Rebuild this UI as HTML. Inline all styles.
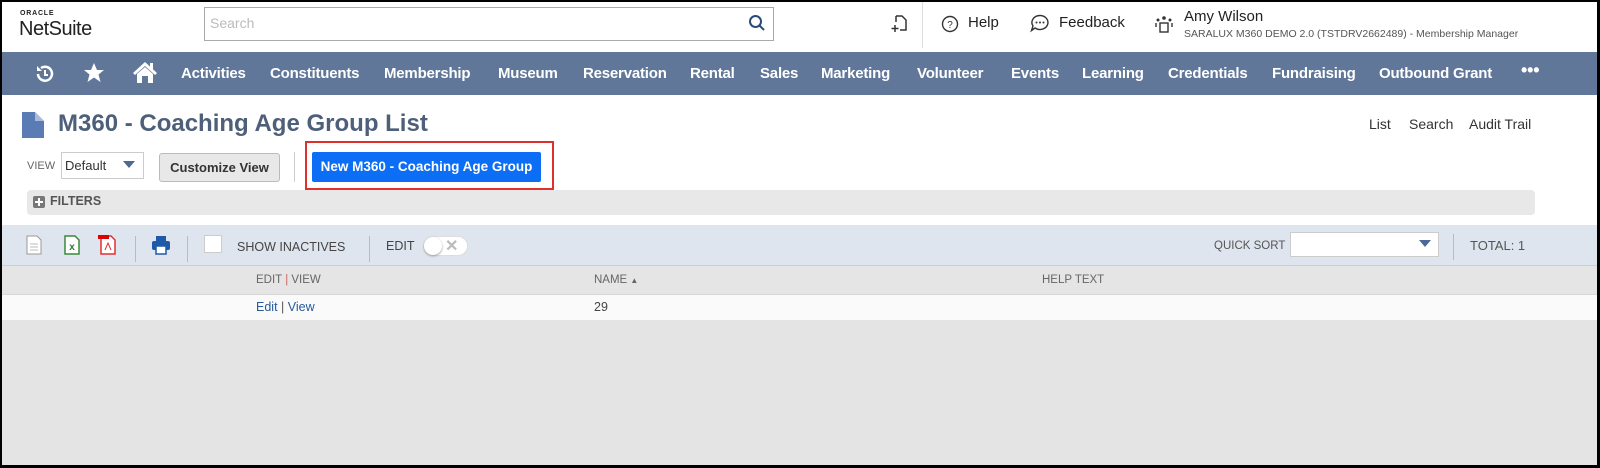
<!DOCTYPE html>
<html><head><meta charset="utf-8"><style>
*{margin:0;padding:0;box-sizing:border-box}
body{width:1600px;height:468px;overflow:hidden;background:#000;font-family:"Liberation Sans",sans-serif;position:relative}
#pg{position:absolute;left:2px;top:2px;width:1595px;height:463px;background:#e4e4e4;overflow:hidden}
.a{position:absolute;white-space:nowrap}
.nav span{position:absolute;top:13px;color:#fff;font-weight:bold;font-size:15px;letter-spacing:-0.2px}
</style></head><body><div id="pg">
<div class="a" style="left:0;top:0;width:1595px;height:50px;background:#fff"></div>
<div class="a" style="left:18px;top:8px;font-size:7px;letter-spacing:0.8px;color:#222;font-weight:bold">ORACLE</div>
<div class="a" style="left:17px;top:16px;font-size:20px;color:#222;letter-spacing:-0.5px">NetSuite</div>
<div class="a" style="left:202px;top:5px;width:570px;height:34px;border:1px solid #aaa;background:#fff"></div>
<div class="a" style="left:208px;top:13px;font-size:14px;color:#bbb">Search</div>
<svg class="a" style="left:746px;top:12px" width="18" height="18" viewBox="0 0 18 18"><circle cx="7.5" cy="7.5" r="5.5" fill="none" stroke="#2a4a7a" stroke-width="2"/><line x1="11.5" y1="11.5" x2="16" y2="16" stroke="#2a4a7a" stroke-width="2"/></svg>
<svg class="a" style="left:888px;top:12px" width="18" height="20" viewBox="0 0 18 20"><path d="M6 2h6l4 4v10H10M6 2v6" fill="none" stroke="#333" stroke-width="1.5"/><path d="M5 11v7M1.5 14.5h7" stroke="#333" stroke-width="1.5"/></svg>
<div class="a" style="left:920px;top:0;width:1px;height:46px;background:#ddd"></div>
<svg class="a" style="left:939px;top:13px" width="18" height="18"><circle cx="9" cy="9" r="7.5" fill="none" stroke="#333" stroke-width="1.4"/><text x="9" y="13" font-size="10" text-anchor="middle" font-family="Liberation Sans" fill="#333">?</text></svg>
<div class="a" style="left:966px;top:12px;font-size:15px;color:#222">Help</div>
<svg class="a" style="left:1028px;top:12px" width="20" height="19"><path d="M10 1.5a8 7 0 1 1 -5 12.5l-3.5 2.5 1.5-4.5a8 7 0 0 1 7-10.5z" fill="none" stroke="#333" stroke-width="1.4"/><circle cx="6.5" cy="8.5" r="1" fill="#333"/><circle cx="10" cy="8.5" r="1" fill="#333"/><circle cx="13.5" cy="8.5" r="1" fill="#333"/></svg>
<div class="a" style="left:1057px;top:12px;font-size:15px;color:#222">Feedback</div>
<svg class="a" style="left:1152px;top:12px" width="20" height="20"><circle cx="10" cy="4" r="1.8" fill="#333"/><circle cx="4" cy="6" r="1.5" fill="#333"/><circle cx="16" cy="6" r="1.5" fill="#333"/><rect x="6" y="9" width="8" height="9" fill="none" stroke="#333" stroke-width="1.4"/><path d="M2 9v4M18 9v4" stroke="#333" stroke-width="1.4"/></svg>
<div class="a" style="left:1182px;top:6px;font-size:15px;color:#222">Amy Wilson</div>
<div class="a" style="left:1182px;top:26px;font-size:10.5px;color:#555">SARALUX M360 DEMO 2.0 (TSTDRV2662489) - Membership Manager</div>
<div class="a nav" style="left:0;top:50px;width:1595px;height:43px;background:#607799">
<svg class="a" style="left:32px;top:11px" width="22" height="22"><path d="M4 11a7 7 0 1 0 3-6" fill="none" stroke="#fff" stroke-width="2.5"/><path d="M3 3v5h5" fill="#fff"/><path d="M11 7v5h3" fill="none" stroke="#fff" stroke-width="2"/></svg>
<svg class="a" style="left:81px;top:10px" width="22" height="22"><path d="M11 1l3 7h7l-5.5 4.5 2 7.5-6.5-4.5-6.5 4.5 2-7.5L1 8h7z" fill="#fff"/></svg>
<svg class="a" style="left:130px;top:8px" width="26" height="24"><path d="M13 2L1 13l2 2 10-9 10 9 2-2z" fill="#fff"/><path d="M5 14v9h16v-9l-8-7z" fill="#fff"/><rect x="10" y="16" width="6" height="7" fill="#607799"/><rect x="18" y="3" width="3" height="6" fill="#fff"/></svg>
<span style="left:179px">Activities</span><span style="left:268px">Constituents</span><span style="left:382px">Membership</span><span style="left:496px">Museum</span><span style="left:581px">Reservation</span><span style="left:688px">Rental</span><span style="left:758px">Sales</span><span style="left:819px">Marketing</span><span style="left:915px">Volunteer</span><span style="left:1009px">Events</span><span style="left:1080px">Learning</span><span style="left:1166px">Credentials</span><span style="left:1270px">Fundraising</span><span style="left:1377px">Outbound Grant</span><span style="left:1519px;top:8px;font-size:18px">•••</span>
</div>
<div class="a" style="left:0;top:93px;width:1595px;height:130px;background:#fff"></div>
<svg class="a" style="left:20px;top:110px" width="22" height="26"><path d="M0 0h13l9 9v17H0z" fill="#5b7bb4"/><path d="M13 0l9 9h-9z" fill="#a9bbd8"/></svg>
<div class="a" style="left:56px;top:108px;font-size:24px;font-weight:bold;color:#4d5f79">M360 - Coaching Age Group List</div>
<div class="a" style="left:1367px;top:114px;font-size:14px;color:#333">List</div>
<div class="a" style="left:1407px;top:114px;font-size:14px;color:#333">Search</div>
<div class="a" style="left:1467px;top:114px;font-size:14px;color:#333">Audit Trail</div>
<div class="a" style="left:25px;top:158px;font-size:11px;color:#666">VIEW</div>
<div class="a" style="left:59px;top:150px;width:83px;height:27px;border:1px solid #ccc;background:#fff"></div>
<div class="a" style="left:63px;top:156px;font-size:13px;color:#333">Default</div>
<svg class="a" style="left:121px;top:159px" width="12" height="8"><path d="M0 0h12l-6 7z" fill="#4d6a96"/></svg>
<div class="a" style="left:157px;top:151px;width:121px;height:29px;border:1px solid #bbb;border-radius:3px;background:#e8e8e8;font-size:13px;font-weight:bold;color:#333;text-align:center;line-height:27px">Customize View</div>
<div class="a" style="left:292px;top:150px;width:1px;height:30px;background:#ccc"></div>
<div class="a" style="left:303px;top:139px;width:249px;height:49px;border:2px solid #e0302b"></div>
<div class="a" style="left:310px;top:150px;width:229px;height:30px;background:#0c6ef5;border-radius:2px;color:#fff;font-size:13.5px;font-weight:bold;text-align:center;line-height:30px">New M360 - Coaching Age Group</div>
<div class="a" style="left:25px;top:188px;width:1508px;height:25px;background:#e8e8e8;border-radius:4px"></div>
<div class="a" style="left:31px;top:194px;width:12px;height:12px;background:#777;border-radius:2px"></div>
<div class="a" style="left:33px;top:199px;width:8px;height:2px;background:#fff"></div>
<div class="a" style="left:36px;top:196px;width:2px;height:8px;background:#fff"></div>
<div class="a" style="left:48px;top:192px;font-size:12.5px;font-weight:bold;color:#555">FILTERS</div>
<div class="a" style="left:0;top:223px;width:1595px;height:41px;background:#dfe5ee;border-bottom:1px solid #ccd"></div>
<svg class="a" style="left:24px;top:233px" width="16" height="20"><path d="M1 1h10l4 4v14H1z" fill="#fff" stroke="#999"/><path d="M4 9h8M4 12h8M4 15h8" stroke="#bbb"/></svg>
<svg class="a" style="left:62px;top:233px" width="16" height="20"><path d="M1 1h10l4 4v14H1z" fill="#fff" stroke="#3a8a3a" stroke-width="1.5"/><text x="8" y="15" font-size="10" font-weight="bold" text-anchor="middle" fill="#2a7a2a" font-family="Liberation Sans">x</text></svg>
<svg class="a" style="left:96px;top:231px" width="18" height="22"><path d="M3 3h10l4 4v14H3z" fill="#fff" stroke="#e03030" stroke-width="1.5"/><rect x="0" y="2" width="11" height="4" fill="#d00"/><path d="M7 17l3-7 3 7" fill="none" stroke="#e03030"/></svg>
<div class="a" style="left:133px;top:234px;width:1px;height:26px;background:#bbb"></div>
<svg class="a" style="left:149px;top:233px" width="20" height="20"><rect x="5" y="1" width="10" height="6" fill="#1f5aa8"/><rect x="1" y="6" width="18" height="9" rx="2" fill="#1f5aa8"/><rect x="5" y="11" width="10" height="8" fill="#fff" stroke="#1f5aa8" stroke-width="1.5"/></svg>
<div class="a" style="left:185px;top:234px;width:1px;height:26px;background:#bbb"></div>
<div class="a" style="left:202px;top:233px;width:18px;height:18px;background:#fff;border:1px solid #ccc"></div>
<div class="a" style="left:235px;top:238px;font-size:12.5px;color:#444">SHOW INACTIVES</div>
<div class="a" style="left:367px;top:234px;width:1px;height:26px;background:#bbb"></div>
<div class="a" style="left:384px;top:237px;font-size:12.5px;color:#444">EDIT</div>
<div class="a" style="left:421px;top:234px;width:45px;height:20px;background:#fff;border-radius:10px;border:1px solid #ddd"></div>
<div class="a" style="left:422px;top:235px;width:18px;height:18px;background:#fff;border-radius:50%;box-shadow:0 1px 2px #999"></div>
<div class="a" style="left:443px;top:234px;font-size:16px;font-weight:bold;color:#bbb">✕</div>
<div class="a" style="left:1212px;top:238px;font-size:11.5px;color:#555">QUICK SORT</div>
<div class="a" style="left:1288px;top:230px;width:149px;height:25px;background:#fff;border:1px solid #ccc"></div>
<svg class="a" style="left:1417px;top:238px" width="12" height="8"><path d="M0 0h12l-6 7z" fill="#4d6a96"/></svg>
<div class="a" style="left:1451px;top:232px;width:1px;height:26px;background:#bbb"></div>
<div class="a" style="left:1468px;top:236px;font-size:13px;color:#555">TOTAL: 1</div>
<div class="a" style="left:0;top:265px;width:1595px;height:28px;background:#e5e5e5;border-bottom:1px solid #d8d8d8"></div>
<div class="a" style="left:254px;top:272px;font-size:11.5px;color:#666">EDIT <span style="color:#c66">|</span> VIEW</div>
<div class="a" style="left:592px;top:272px;font-size:11.5px;color:#666">NAME <span style="font-size:8px">▲</span></div>
<div class="a" style="left:1040px;top:272px;font-size:11.5px;color:#666">HELP TEXT</div>
<div class="a" style="left:0;top:293px;width:1595px;height:25px;background:#fafafa"></div>
<div class="a" style="left:254px;top:298px;font-size:12.5px;color:#255a9b">Edit <span style="color:#555">|</span> View</div>
<div class="a" style="left:592px;top:298px;font-size:12.5px;color:#444">29</div>
</div></body></html>
